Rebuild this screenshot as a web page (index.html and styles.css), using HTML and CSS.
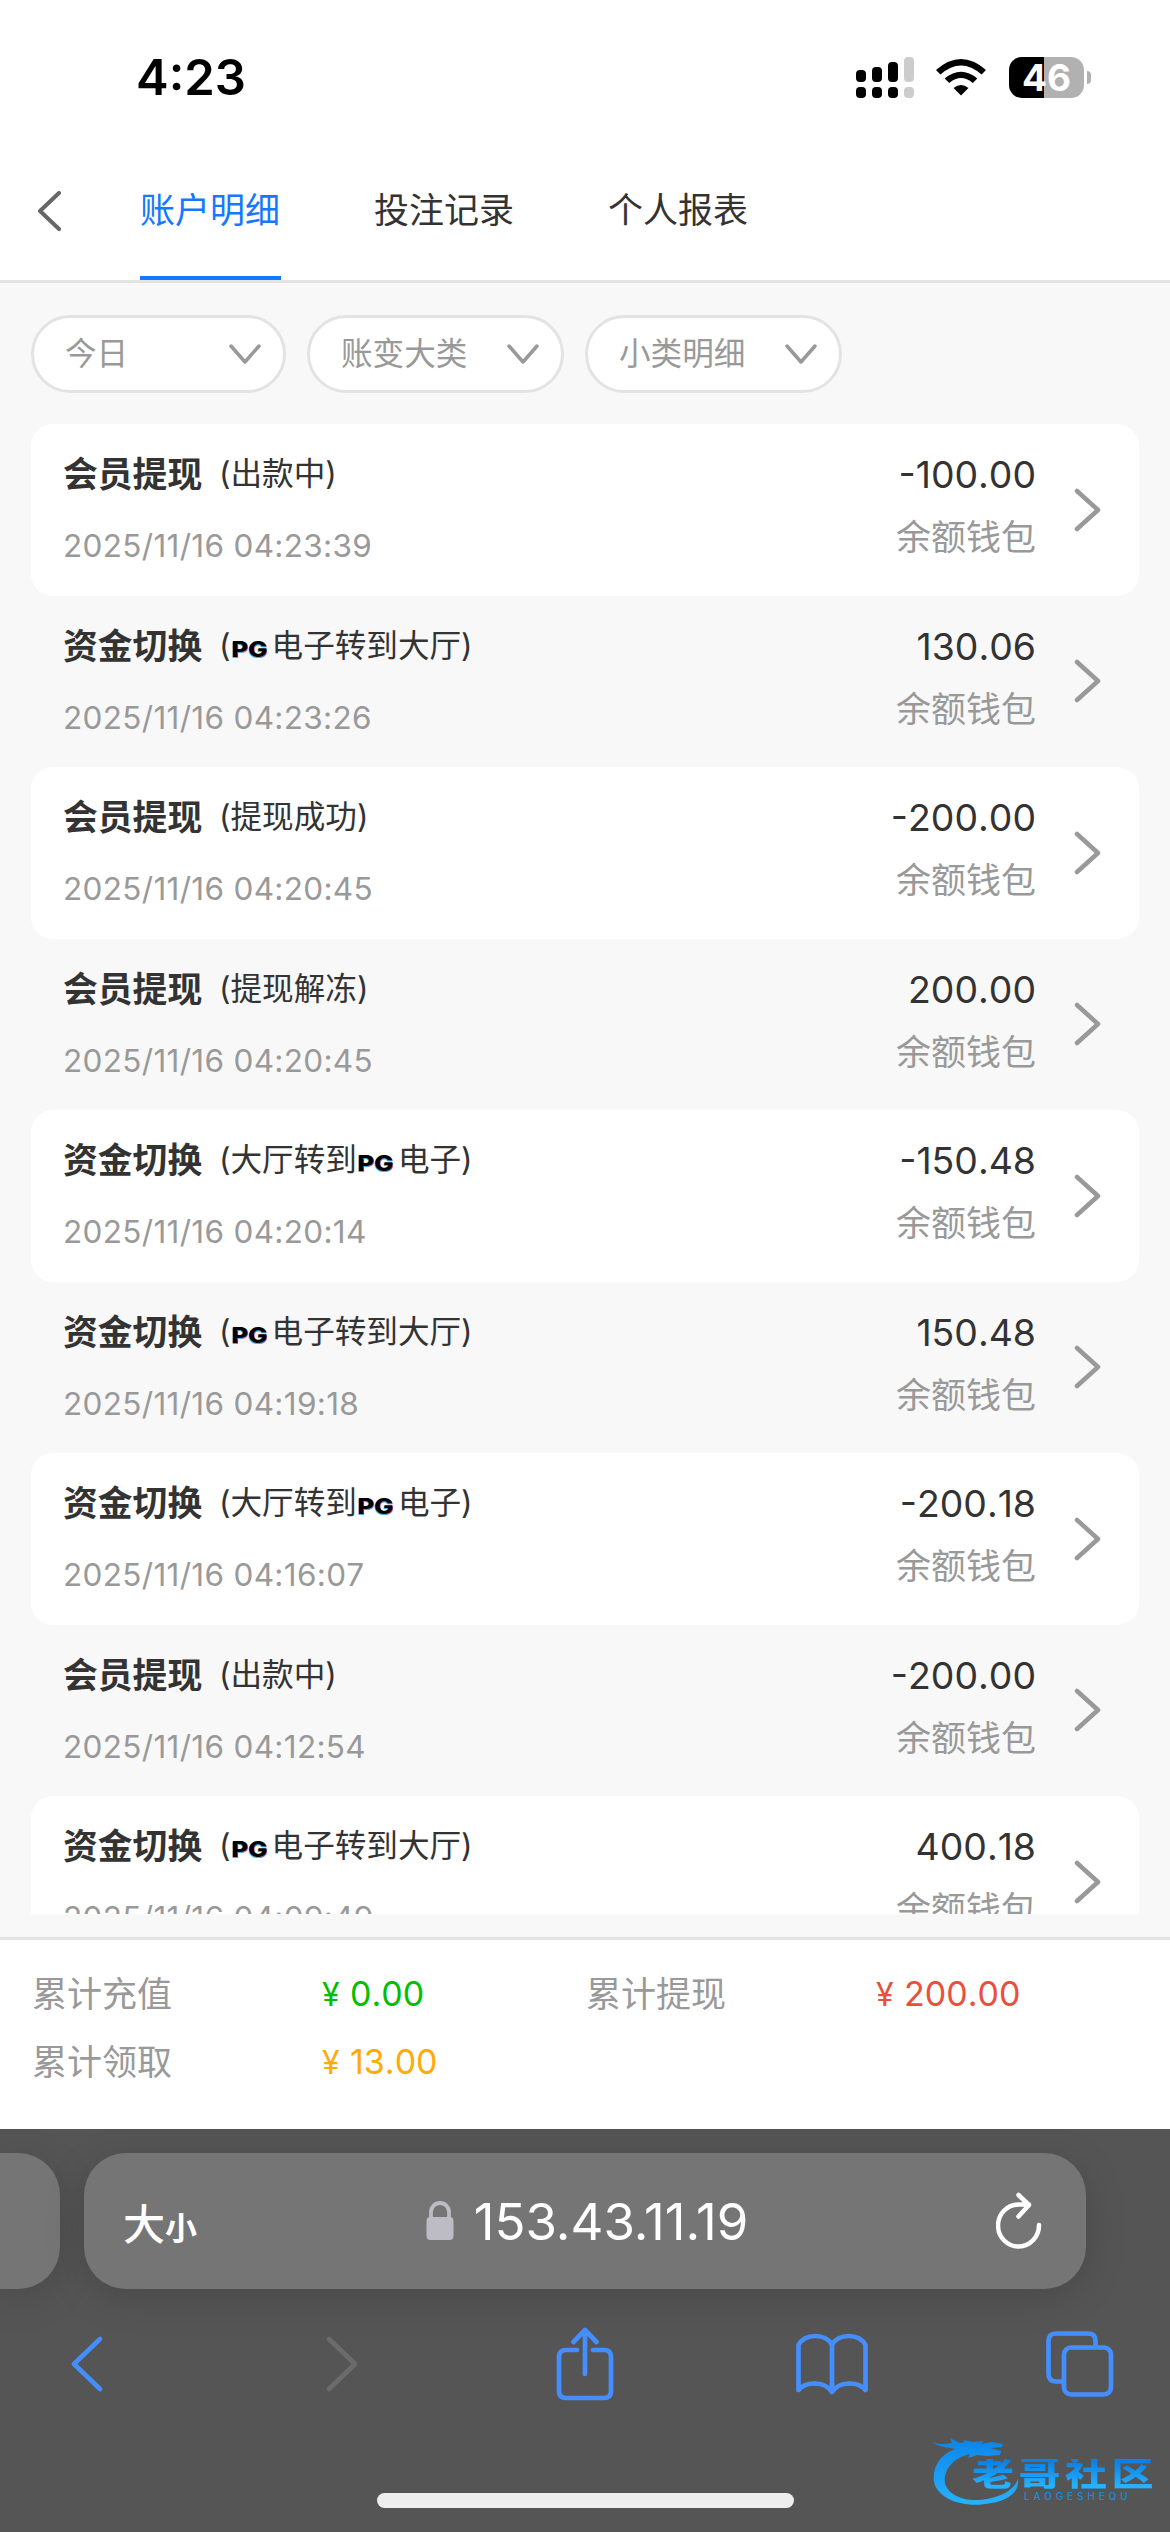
FILE: index.html
```html
<!DOCTYPE html>
<html lang="zh-CN">
<head>
<meta charset="utf-8">
<title>账户明细</title>
<link rel="stylesheet" href="styles.css">
</head>
<body>
<div class="screen">
  <header class="status">
    <span class="clock">4:23</span>
    <div class="status-icons">
      <svg class="signal" width="58" height="42" viewBox="0 0 58 42">
        <rect x="0" y="13" width="10" height="12" rx="4"/><rect x="16" y="10" width="10" height="15" rx="4"/><rect x="32" y="5" width="10" height="20" rx="4"/>
        <rect x="0" y="30" width="10" height="11" rx="4"/><rect x="16" y="30" width="10" height="11" rx="4"/><rect x="32" y="30" width="10" height="11" rx="4"/>
        <g fill="#ccc"><rect x="48" y="0" width="10" height="25" rx="4"/><rect x="48" y="30" width="10" height="11" rx="4"/></g>
      </svg>
      <svg class="wifi" width="50" height="42" viewBox="0 0 50 42">
        <path d="M0 13Q25 -9 50 13L45.500 17.500Q25 -.5 4.500 17.500Z"/>
        <path d="M8.700 21.500Q25 8 41.300 21.500L36.800 26Q25 16 13.200 26Z"/>
        <path d="M17.500 31Q25 25 32.500 31L25 38.500Z"/>
      </svg>
      <div class="battery"><span>46</span></div><i class="battery-cap"></i>
    </div>
  </header>
  <nav class="tabs">
    <svg class="back" width="24" height="40" viewBox="0 0 24 40"><path d="M22 2L3 20L22 38"/></svg>
    <a class="tab active">账户明细</a>
    <a class="tab">投注记录</a>
    <a class="tab">个人报表</a>
  </nav>
  <main class="content">
    <div class="filters">
      <div class="pill pill-day">今日<svg width="32" height="22" viewBox="0 0 32 22"><path d="M2 2L16 18L30 2"/></svg></div>
      <div class="pill">账变大类<svg width="32" height="22" viewBox="0 0 32 22"><path d="M2 2L16 18L30 2"/></svg></div>
      <div class="pill">小类明细<svg width="32" height="22" viewBox="0 0 32 22"><path d="M2 2L16 18L30 2"/></svg></div>
    </div>
    <div class="list">
      <div class="row"><div class="info"><div class="title"><b>会员提现</b><span>(出款中)</span></div><time>2025/11/16 04:23:39</time></div><div class="sum"><strong>-100.00</strong><em>余额钱包</em></div><svg class="go" width="28" height="44" viewBox="0 0 28 44"><path d="M3 3L24 22L3 41"/></svg></div>
      <div class="row"><div class="info"><div class="title"><b>资金切换</b><span>(<i class="pg">PG</i>电子转到大厅)</span></div><time>2025/11/16 04:23:26</time></div><div class="sum"><strong>130.06</strong><em>余额钱包</em></div><svg class="go" width="28" height="44" viewBox="0 0 28 44"><path d="M3 3L24 22L3 41"/></svg></div>
      <div class="row"><div class="info"><div class="title"><b>会员提现</b><span>(提现成功)</span></div><time>2025/11/16 04:20:45</time></div><div class="sum"><strong>-200.00</strong><em>余额钱包</em></div><svg class="go" width="28" height="44" viewBox="0 0 28 44"><path d="M3 3L24 22L3 41"/></svg></div>
      <div class="row"><div class="info"><div class="title"><b>会员提现</b><span>(提现解冻)</span></div><time>2025/11/16 04:20:45</time></div><div class="sum"><strong>200.00</strong><em>余额钱包</em></div><svg class="go" width="28" height="44" viewBox="0 0 28 44"><path d="M3 3L24 22L3 41"/></svg></div>
      <div class="row"><div class="info"><div class="title"><b>资金切换</b><span>(大厅转到<i class="pg">PG</i>电子)</span></div><time>2025/11/16 04:20:14</time></div><div class="sum"><strong>-150.48</strong><em>余额钱包</em></div><svg class="go" width="28" height="44" viewBox="0 0 28 44"><path d="M3 3L24 22L3 41"/></svg></div>
      <div class="row"><div class="info"><div class="title"><b>资金切换</b><span>(<i class="pg">PG</i>电子转到大厅)</span></div><time>2025/11/16 04:19:18</time></div><div class="sum"><strong>150.48</strong><em>余额钱包</em></div><svg class="go" width="28" height="44" viewBox="0 0 28 44"><path d="M3 3L24 22L3 41"/></svg></div>
      <div class="row"><div class="info"><div class="title"><b>资金切换</b><span>(大厅转到<i class="pg">PG</i>电子)</span></div><time>2025/11/16 04:16:07</time></div><div class="sum"><strong>-200.18</strong><em>余额钱包</em></div><svg class="go" width="28" height="44" viewBox="0 0 28 44"><path d="M3 3L24 22L3 41"/></svg></div>
      <div class="row"><div class="info"><div class="title"><b>会员提现</b><span>(出款中)</span></div><time>2025/11/16 04:12:54</time></div><div class="sum"><strong>-200.00</strong><em>余额钱包</em></div><svg class="go" width="28" height="44" viewBox="0 0 28 44"><path d="M3 3L24 22L3 41"/></svg></div>
      <div class="row"><div class="info"><div class="title"><b>资金切换</b><span>(<i class="pg">PG</i>电子转到大厅)</span></div><time>2025/11/16 04:09:49</time></div><div class="sum"><strong>400.18</strong><em>余额钱包</em></div><svg class="go" width="28" height="44" viewBox="0 0 28 44"><path d="M3 3L24 22L3 41"/></svg></div>
    </div>
  </main>
  <footer class="totals">
    <span>累计充值</span><span class="money green"><i>¥</i>0.00</span>
    <span>累计提现</span><span class="money red"><i>¥</i>200.00</span>
    <span>累计领取</span><span class="money amber"><i>¥</i>13.00</span>
  </footer>
  <section class="browser">
    <div class="address-row">
      <div class="prev-tab"></div>
      <div class="address">
        <span class="size"><span class="big">大</span><span class="small">小</span></span>
        <div class="host">
          <svg width="28" height="40" viewBox="0 0 28 40"><path d="M5 18V11a9 9 0 0 1 18 0v7" fill="none" stroke="#bdbcc4" stroke-width="3.800"/><rect x=".5" y="16" width="27" height="23" rx="4" fill="#bdbcc4"/></svg>
          <span>153.43.11.19</span>
        </div>
        <svg class="reload" width="48" height="58" viewBox="0 0 48 58"><path d="M43 33A20.500 21 0 1 1 22.500 12.500H33M22.500 3L33 13L22.500 24.500"/></svg>
      </div>
    </div>
    <div class="toolbar">
      <svg width="34" height="58" viewBox="0 0 34 58"><path d="M30 4L4 29L30 54"/></svg>
      <svg class="off" width="34" height="58" viewBox="0 0 34 58"><path d="M4 4L30 29L4 54"/></svg>
      <svg class="share" width="60" height="74" viewBox="0 0 60 74"><path d="M22 23H11Q4 23 4 30V64Q4 71 11 71H49Q56 71 56 64V30Q56 23 49 23H38M30 4V47M18.500 15L30 3L41.500 15"/></svg>
      <svg class="book" width="74" height="64" viewBox="0 0 74 64"><path d="M37 13C31 1 10 1 3.500 13V58C11 49 30 49 37 60C44 49 63 49 70.500 58V13C64 1 43 1 37 13V60"/></svg>
      <svg class="windows" width="70" height="68" viewBox="0 0 70 68"><path d="M17 51.500H11Q3.500 51.500 3.500 44V11Q3.500 3.500 11 3.500H43Q50.500 3.500 50.500 11V17"/><rect x="19" y="17.500" width="47" height="47" rx="7"/></svg>
    </div>
    <div class="home"></div>
    <div class="brand">
      <svg width="100" height="80" viewBox="0 0 100 80">
        <defs><linearGradient id="sky" x1="0" y1="0" x2="0" y2="1"><stop offset="0" stop-color="#0b84e8"/><stop offset="1" stop-color="#27b2ff"/></linearGradient></defs>
        <path fill="url(#sky)" d="M3 13C9 16 15 15 22 14L20 9L30 14L35 13L33 11L43 13L54 12L51 15L62 13L73 15L72 18L60 19L71 22L70 26L57 27L47 26L38 29L40 25C22 29 13 42 15 54C18 67 37 74 57 70C72 67 83 62 88 50C90 63 77 72 61 74C34 80 8 70 4 53C2 37 11 25 25 20C17 18 8 18 3 13Z"/>
      </svg>
      <span class="brand-name">老哥社区</span>
      <span class="brand-sub">LAOGESHEQU</span>
    </div>
  </section>
</div>
</body>
</html>
```
FILE: styles.css
```css
* { box-sizing: border-box; }
body { margin: 0; background: #fff; }
i, em { font-style: normal; }
.screen {
  width: 1170px; height: 2532px; overflow: hidden;
  display: flex; flex-direction: column;
  font-family: Inter, "Noto Sans CJK SC", sans-serif;
  color: #333;
}
svg { display: block; flex: none; }

.status { height: 141px; padding: 57px 79px 0 136px; display: flex; justify-content: space-between; align-items: flex-start; color: #000; }
.clock { font-size: 49px; line-height: 42px; font-weight: 600; }
.status-icons { display: flex; align-items: flex-start; }
.wifi { margin-left: 22px; }
.battery {
  margin-left: 23px; width: 75px; height: 41px; border-radius: 13px;
  background: linear-gradient(90deg, #000 35px, #b1b1b1 35px);
  color: #fff; font-size: 37px; font-weight: 700; line-height: 42px; text-align: center;
}
.battery-cap { width: 4px; height: 13px; margin: 14px 0 0 3px; border-radius: 0 4px 4px 0; background: #b1b1b1; }

.tabs { height: 142px; display: flex; align-items: stretch; border-bottom: 3px solid #e3e3e3; padding-left: 37px; }
.back { align-self: center; margin-right: 79px; }
.back path { fill: none; stroke: #666; stroke-width: 4; stroke-linecap: round; stroke-linejoin: round; }
.tab { width: 141px; margin-right: 93px; font-size: 35px; line-height: 138px; border-bottom: 4px solid transparent; white-space: nowrap; }
.tab.active { color: #1677ff; border-color: #1677ff; }

.content { height: 1654px; background: #f8f8f8; padding: 32px 31px 0; }
.filters { display: flex; gap: 21px; height: 78px; }
.pill {
  width: 257px; height: 78px; border: 3px solid #e3e3e3; border-radius: 39px; background: #fff;
  padding: 0 22px 0 31px; display: flex; align-items: center; justify-content: space-between;
  font-size: 31.600px; line-height: 72px; color: #999;
}
.pill-day { width: 255px; }
.pill svg { margin-top: 2px; }
.pill path { fill: none; stroke: #999; stroke-width: 3.500; stroke-linecap: round; stroke-linejoin: round; }

.list { margin-top: 31px; height: 1490px; overflow: hidden; }
.row { height: 171.500px; padding: 0 37px 0 32px; display: flex; border-radius: 22px; }
.row:nth-child(odd) { background: #fff; }
.info { flex: 1; padding-top: 25px; }
.title { height: 50px; line-height: 50px; display: flex; white-space: nowrap; }
.title b { font-size: 34.800px; font-weight: 700; width: 156px; }
.title span { font-size: 31.600px; }
.pg {
  display: inline-block; width: 41px; font-size: 22px; font-weight: 800; color: #000; text-align: center; line-height: 30px;
  transform: translateX(-2px) scaleX(1.16); text-shadow: -.6px .6px 0 #3bb5ff, .6px .6px 0 #ff5a6a;
}
.info time { display: block; margin-top: 25px; font-size: 31.500px; letter-spacing: .32px; line-height: 44px; color: #999; white-space: nowrap; font-kerning: none; }
.sum { text-align: right; padding-top: 26px; }
.sum strong { display: block; font-size: 37.400px; font-weight: 400; line-height: 50px; font-kerning: none; }
.sum em { display: block; margin-top: 12px; font-size: 35px; line-height: 50px; color: #999; }
.go { align-self: center; margin: 0 0 0 38px; }
.go path { fill: none; stroke: #999; stroke-width: 4.500; stroke-linecap: round; stroke-linejoin: round; }

.totals {
  height: 192px; border-top: 3px solid #e3e3e3; padding: 20px 0 0 32px;
  display: grid; grid-template-columns: 290px 264px 290px 1fr; grid-auto-rows: 68px; align-content: start;
  font-size: 35px; line-height: 68px; color: #999;
}
.money { font-size: 34px; font-kerning: none; }
.money i { display: inline-block; width: 28px; font-size: 32px; }
.green { color: #04be02; }
.red { color: #ea4e3d; }
.amber { color: #ffaa09; }

.browser { position: relative; height: 403px; background: #555; overflow: hidden; }
.address-row { display: flex; gap: 24px; padding-top: 24px; height: 160px; }
.prev-tab { width: 60px; height: 136px; border-radius: 0 42px 42px 0; background: #757575; box-shadow: 0 8px 40px rgba(0,0,0,.15); }
.address {
  width: 1002px; height: 136px; border-radius: 42px; background: #757575; box-shadow: 0 8px 40px rgba(0,0,0,.15);
  display: grid; grid-template-columns: 254px 1fr 250px; align-items: center; color: #fff;
}
.size { padding-left: 39px; display: flex; align-items: baseline; font-weight: 500; }
.big { font-size: 42px; }
.small { font-size: 32px; font-weight: 700; }
.host { display: flex; align-items: center; justify-content: center; gap: 20px; font-size: 51px; white-space: nowrap; }
.reload { justify-self: end; margin-right: 42px; }
.reload path { fill: none; stroke: #fff; stroke-width: 4.500; stroke-linecap: round; stroke-linejoin: round; }
.toolbar { height: 150px; padding-left: 70px; display: flex; align-items: center; }
.toolbar path, .toolbar rect { fill: none; stroke: #458eff; stroke-width: 4.700; stroke-linecap: round; stroke-linejoin: round; }
.toolbar .off { margin-left: 221px; }
.toolbar .off path { stroke: #6b6b6b; }
.share { margin-left: 196px; }
.book { margin-left: 180px; }
.windows { margin-left: 176px; }
.home { width: 417px; height: 15px; margin: 54px auto 0; border-radius: 8px; background: #eee; }
.brand { position: absolute; left: 930px; top: 300px; width: 230px; height: 80px; }
.brand-name {
  position: absolute; left: 42px; top: 26px; font-size: 42px; line-height: 38px; font-weight: 900; letter-spacing: 4.500px; white-space: nowrap;
  transform: scaleY(.78);
  background: linear-gradient(#0b80e4 10%, #27b2ff 90%); background-clip: text; -webkit-background-clip: text; color: transparent;
}
.brand-sub { position: absolute; left: 94px; top: 62px; font-size: 10px; line-height: 10px; letter-spacing: 3.900px; font-weight: 500; color: #158ddd; }
```
